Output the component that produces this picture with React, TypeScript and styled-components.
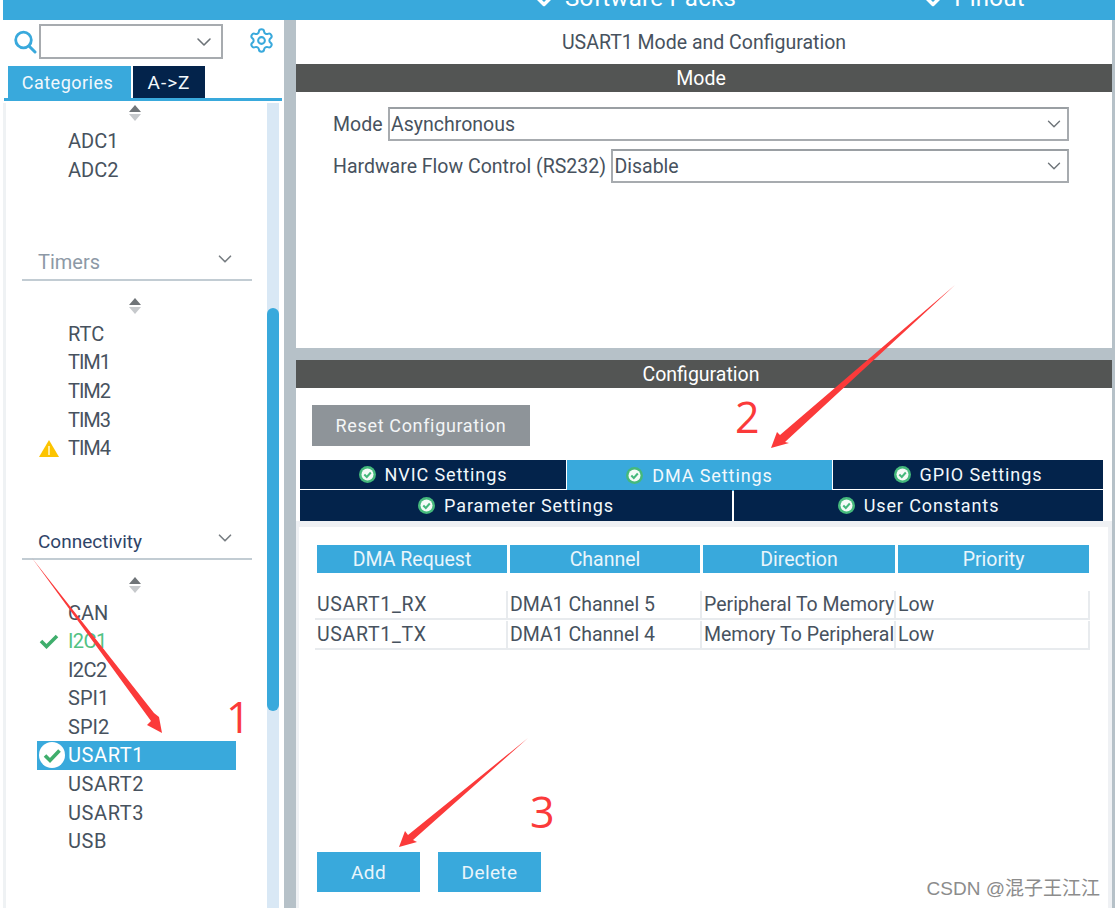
import React from "react";
import styled, { createGlobalStyle } from "styled-components";
import { ChevronDown, Settings } from "lucide-react";

const BLUE = "#39a9dc";
const NAVY = "#03234b";
const DARK = "#535554";
const GUTTER = "#b6c1c8";
const TEXT = "#47525e";

const Global = createGlobalStyle`
  html, body { margin: 0; padding: 0; background: #fff; }
  body { font-family: Roboto, "Liberation Sans", sans-serif; }
  * { box-sizing: border-box; }
`;

const Page = styled.div`
  position: relative;
  width: 1115px;
  height: 908px;
  overflow: hidden;
  padding-left: 3px;
  display: flex;
  flex-direction: column;
  background: #fff;
`;

const TopBar = styled.header`
  height: 20px;
  flex: none;
  background: ${BLUE};
  overflow: hidden;
`;

const TopMenu = styled.nav`
  display: flex;
  margin: -17px 0 0 527px;
  gap: 183px;
`;

const TopMenuItem = styled.div`
  display: flex;
  align-items: flex-start;
  gap: 7px;
  color: #fff;
  font-size: 24px;
  letter-spacing: 0.3px;
  line-height: 30px;
  svg {
    margin-top: 4px;
  }
`;

const Body = styled.div`
  flex: 1;
  min-height: 0;
  display: flex;
`;

const Sidebar = styled.aside`
  width: 281px;
  flex: none;
  display: flex;
  flex-direction: column;
`;

const SearchRow = styled.div`
  height: 46px;
  flex: none;
  display: flex;
  align-items: flex-start;
  padding: 4px 0 0 10px;
`;

const SearchIcon = styled.svg`
  width: 24px;
  height: 24px;
  margin: 6px 2px 0 0;
  flex: none;
`;

const SearchBox = styled.div`
  width: 184px;
  height: 35px;
  border: 2px solid #a7abaf;
  display: flex;
  align-items: center;
  justify-content: flex-end;
  padding-right: 5px;
  color: #6d7378;
`;

const Gear = styled.div`
  margin: 3px 0 0 25px;
  color: ${BLUE};
  display: flex;
`;

const TabStrip = styled.div`
  height: 35px;
  flex: none;
  display: flex;
  align-items: flex-start;
  gap: 2px;
  padding-left: 4px;
  border-bottom: 3px solid ${BLUE};
  margin-right: 2px;
  margin-left: 1px;
`;

const SideTab = styled.div<{ $active?: boolean }>`
  height: 32px;
  width: ${(p) => (p.$active ? "123px" : "72px")};
  padding-right: ${(p) => (p.$active ? "4px" : "0")};
  background: ${(p) => (p.$active ? BLUE : NAVY)};
  color: #f2f8fc;
  font-size: ${(p) => (p.$active ? "18px" : "19px")};
  letter-spacing: ${(p) => (p.$active ? "0.5px" : "1px")};
  display: flex;
  align-items: center;
  justify-content: center;
`;

const ListWrap = styled.div`
  flex: 1;
  min-height: 0;
  display: flex;
  margin-top: 2px;
`;

const LeftEdge = styled.div`
  width: 3px;
  flex: none;
  background: #eff2f4;
`;

const List = styled.div`
  width: 261px;
  flex: none;
`;

const Track = styled.div`
  width: 12px;
  flex: none;
  background: #d9e8f5;
  padding-top: 205px;
`;

const Thumb = styled.div`
  height: 403px;
  background: ${BLUE};
  border-radius: 6px;
`;

const SortArrows = styled.svg<{ $top: number }>`
  display: block;
  width: 14px;
  height: 18px;
  margin: ${(p) => p.$top}px 0 4.7px 122px;
`;

const GroupHeader = styled.div<{ $strong?: boolean }>`
  height: 37px;
  margin: 60px 0 0 16px;
  width: 230px;
  border-bottom: 2px solid #c2ccd3;
  display: flex;
  align-items: center;
  justify-content: space-between;
  padding: 2px 16px 0 16px;
  font-size: ${(p) => (p.$strong ? "19px" : "20px")};
  color: ${(p) => (p.$strong ? "#2f4468" : "#8d99a6")};
`;

const GroupChevron = styled.div`
  display: flex;
  margin-top: -6px;
  color: #777d82;
`;

const Item = styled.div<{ $state?: "selected" | "ok"; $track?: number }>`
  height: 28.6px;
  width: 199px;
  margin-left: 31px;
  display: flex;
  align-items: center;
  font-size: 20px;
  letter-spacing: ${(p) => p.$track ?? 0}px;
  background: ${(p) => (p.$state === "selected" ? BLUE : "transparent")};
  color: ${(p) =>
    p.$state === "selected" ? "#fff" : p.$state === "ok" ? "#52c283" : TEXT};
`;

const ItemIcon = styled.span`
  width: 31px;
  flex: none;
  display: flex;
  align-items: center;
  padding-left: 2px;
`;

const Gap = styled.div`
  width: 12px;
  flex: none;
  background: ${GUTTER};
`;

const Main = styled.main`
  width: 816px;
  flex: none;
  display: flex;
  flex-direction: column;
`;

const RightEdge = styled.div`
  flex: 1;
  background: ${GUTTER};
`;

const Title = styled.div`
  height: 44px;
  flex: none;
  display: flex;
  align-items: center;
  justify-content: center;
  font-size: 19.5px;
  color: ${TEXT};
`;

const SectionBar = styled.div`
  height: 28px;
  flex: none;
  background: ${DARK};
  color: #fff;
  font-size: 19.5px;
  display: flex;
  align-items: center;
  justify-content: center;
  padding: 1px 6px 0 0;
`;

const ModePanel = styled.section`
  height: 256px;
  flex: none;
  padding: 15px 43px 0 37px;
  display: flex;
  flex-direction: column;
  gap: 8px;
`;

const FieldRow = styled.div`
  display: flex;
  align-items: center;
  gap: 5.5px;
  font-size: 19.5px;
  color: ${TEXT};
`;

const Select = styled.div`
  flex: 1;
  height: 34px;
  border: 2px solid #a7abaf;
  border-top-color: #9a9fa3;
  display: flex;
  align-items: center;
  justify-content: space-between;
  padding: 0 2px 0 1px;
  color: ${TEXT};
`;

const Divider = styled.div`
  height: 12px;
  flex: none;
  background: ${GUTTER};
`;

const ConfigPanel = styled.section`
  flex: 1;
  min-height: 0;
  display: flex;
  flex-direction: column;
`;

const ResetButton = styled.div`
  width: 218px;
  height: 41px;
  flex: none;
  margin: 17px 0 14px 16px;
  background: #8e9499;
  color: #f3f5f6;
  font-size: 18px;
  letter-spacing: 0.65px;
  display: flex;
  align-items: center;
  justify-content: center;
`;

const TabRow = styled.div<{ $cols: string }>`
  display: grid;
  grid-template-columns: ${(p) => p.$cols};
  column-gap: 1px;
  width: 803px;
  margin-left: 4px;
  height: 30px;
  flex: none;
`;

const ConfigTab = styled.div<{ $active?: boolean }>`
  background: ${(p) => (p.$active ? BLUE : NAVY)};
  color: #f2f8fc;
  font-size: 18px;
  letter-spacing: 0.9px;
  height: ${(p) => (p.$active ? "31px" : "29px")};
  position: relative;
  display: flex;
  align-items: center;
  justify-content: center;
  gap: 9px;
`;

const SecondRow = styled(TabRow)`
  height: 31px;
  column-gap: 2px;
  ${ConfigTab} {
    height: 31px;
  }
`;

const TabContent = styled.div`
  flex: 1;
  min-height: 0;
  display: flex;
  flex-direction: column;
  background: #eff1f4;
  padding: 6px 4px 0 3px;
`;

const TabInner = styled.div`
  flex: 1;
  min-height: 0;
  background: #fff;
  padding: 18px 0 16px 18px;
  display: flex;
  flex-direction: column;
`;

const HeadRow = styled.div`
  display: grid;
  grid-template-columns: 190px 190px 192px 191px;
  column-gap: 3px;
  margin-bottom: 17px;
`;

const HeadCell = styled.div`
  height: 28px;
  background: ${BLUE};
  color: #eaf5fb;
  font-size: 19.5px;
  display: flex;
  align-items: center;
  justify-content: center;
`;

const BodyRow = styled.div`
  display: grid;
  grid-template-columns: 193px 194px 194px 194px;
  width: 775px;
  margin-left: -2px;
  height: 30px;
  padding-top: 1px;
  border-bottom: 2px solid #e8ebee;
`;

const BodyCell = styled.div<{ $track?: number }>`
  font-size: 19.5px;
  letter-spacing: ${(p) => p.$track ?? 0}px;
  color: ${TEXT};
  display: flex;
  align-items: center;
  padding: 0 0 1px 2px;
  border-right: 2px solid #e8ebee;
  white-space: nowrap;
  overflow: hidden;
`;

const ButtonRow = styled.div`
  margin-top: auto;
  display: flex;
  gap: 18px;
`;

const ActionButton = styled.div`
  width: 103px;
  height: 40px;
  background: ${BLUE};
  color: #eaf5fb;
  font-size: 19px;
  letter-spacing: 0.4px;
  display: flex;
  align-items: center;
  justify-content: center;
`;

const Annotations = styled.svg`
  position: absolute;
  inset: 0;
  width: 1115px;
  height: 908px;
  pointer-events: none;
`;

const Numeral = styled.span<{ $x: number; $y: number }>`
  position: absolute;
  left: ${(p) => p.$x}px;
  top: ${(p) => p.$y}px;
  font-family: "Open Sans", "Noto Sans", sans-serif;
  font-size: 43px;
  line-height: 58px;
  color: #fb3a3a;
`;

const Watermark = styled.span`
  position: absolute;
  right: 15px;
  bottom: 8px;
  font-family: "Liberation Sans", "Noto Sans CJK SC", sans-serif;
  font-size: 19px;
  line-height: 22px;
  color: #8c8c8c;
  white-space: nowrap;
`;

const Sort = ({ top }: { top: number }) => (
  <SortArrows $top={top} viewBox="0 0 14 18">
    <path d="M7 1 L13 8 H1 Z" fill="#6f7478" />
    <path d="M7 17 L13 10 H1 Z" fill="#c6c9cc" />
  </SortArrows>
);

const TabCheck = () => (
  <svg width="17" height="17" viewBox="0 0 17 17">
    <circle cx="8.5" cy="8.5" r="8.5" fill="#45b97c" />
    <circle cx="8.5" cy="8.5" r="6" fill="#f4fbf7" />
    <path d="M5.3 8.5 L7.8 11 L11.8 6.5" fill="none" stroke="#45b97c" strokeWidth="2" />
  </svg>
);

const OkIcon = () => (
  <svg width="20" height="16" viewBox="0 0 20 16">
    <path d="M2 8 L7.5 13.5 L18 3" fill="none" stroke="#3fae6c" strokeWidth="3.6" />
  </svg>
);

const SelectedIcon = () => (
  <svg width="26" height="26" viewBox="0 0 26 26">
    <circle cx="13" cy="13" r="13" fill="#fff" />
    <path d="M6 13.5 L11 18.5 L20.5 8.5" fill="none" stroke="#3fae6c" strokeWidth="3.6" />
  </svg>
);

const WarnIcon = () => (
  <svg width="20" height="17" viewBox="0 0 20 17">
    <path d="M10 0 L20 17 H0 Z" fill="#fcc400" />
    <rect x="9.2" y="6" width="1.6" height="9" fill="#fff4c4" />
  </svg>
);

const tabs1 = [
  { label: "NVIC Settings" },
  { label: "DMA Settings", active: true },
  { label: "GPIO Settings" },
];

const rows = [
  ["USART1_RX", "DMA1 Channel 5", "Peripheral To Memory", "Low"],
  ["USART1_TX", "DMA1 Channel 4", "Memory To Peripheral", "Low"],
];

export default function App() {
  return (
    <Page>
      <Global />
      <TopBar>
        <TopMenu>
          <TopMenuItem>
            <ChevronDown size={28} strokeWidth={3} />
            Software Packs
          </TopMenuItem>
          <TopMenuItem>
            <ChevronDown size={28} strokeWidth={3} />
            Pinout
          </TopMenuItem>
        </TopMenu>
      </TopBar>
      <Body>
        <Sidebar>
          <SearchRow>
            <SearchIcon viewBox="0 0 24 24">
              <circle cx="10.5" cy="10" r="7.8" fill="none" stroke={BLUE} strokeWidth="2.8" />
              <path d="M16 16 L22 22" stroke={BLUE} strokeWidth="3" strokeLinecap="round" />
            </SearchIcon>
            <SearchBox>
              <ChevronDown size={24} strokeWidth={1.6} />
            </SearchBox>
            <Gear>
              <Settings size={27} strokeWidth={1.8} />
            </Gear>
          </SearchRow>
          <TabStrip>
            <SideTab $active>Categories</SideTab>
            <SideTab>A-&gt;Z</SideTab>
          </TabStrip>
          <ListWrap>
            <LeftEdge />
            <List>
              <Sort top={1} />
              <Item><ItemIcon />ADC1</Item>
              <Item><ItemIcon />ADC2</Item>
              <GroupHeader>
                Timers
                <GroupChevron><ChevronDown size={22} strokeWidth={1.8} /></GroupChevron>
              </GroupHeader>
              <Sort top={16} />
              <Item><ItemIcon />RTC</Item>
              <Item $track={-1}><ItemIcon />TIM1</Item>
              <Item $track={-1}><ItemIcon />TIM2</Item>
              <Item $track={-1}><ItemIcon />TIM3</Item>
              <Item $track={-1}><ItemIcon><WarnIcon /></ItemIcon>TIM4</Item>
              <GroupHeader $strong>
                Connectivity
                <GroupChevron><ChevronDown size={22} strokeWidth={1.8} /></GroupChevron>
              </GroupHeader>
              <Sort top={16} />
              <Item><ItemIcon />CAN</Item>
              <Item $state="ok" $track={-0.6}><ItemIcon><OkIcon /></ItemIcon>I2C1</Item>
              <Item $track={-0.6}><ItemIcon />I2C2</Item>
              <Item><ItemIcon />SPI1</Item>
              <Item><ItemIcon />SPI2</Item>
              <Item $state="selected" $track={0.6}><ItemIcon><SelectedIcon /></ItemIcon>USART1</Item>
              <Item $track={0.6}><ItemIcon />USART2</Item>
              <Item $track={0.6}><ItemIcon />USART3</Item>
              <Item $track={0.6}><ItemIcon />USB</Item>
            </List>
            <Track><Thumb /></Track>
          </ListWrap>
        </Sidebar>
        <Gap />
        <Main>
          <Title>USART1 Mode and Configuration</Title>
          <SectionBar>Mode</SectionBar>
          <ModePanel>
            <FieldRow>
              Mode
              <Select>Asynchronous<ChevronDown size={22} strokeWidth={1.5} color="#6d7378" /></Select>
            </FieldRow>
            <FieldRow>
              Hardware Flow Control (RS232)
              <Select>Disable<ChevronDown size={22} strokeWidth={1.5} color="#6d7378" /></Select>
            </FieldRow>
          </ModePanel>
          <Divider />
          <ConfigPanel>
            <SectionBar>Configuration</SectionBar>
            <ResetButton>Reset Configuration</ResetButton>
            <TabRow $cols="266px 265px 270px">
              {tabs1.map((t) => (
                <ConfigTab key={t.label} $active={t.active}>
                  <TabCheck />
                  {t.label}
                </ConfigTab>
              ))}
            </TabRow>
            <SecondRow $cols="432px 369px">
              <ConfigTab><TabCheck />Parameter Settings</ConfigTab>
              <ConfigTab><TabCheck />User Constants</ConfigTab>
            </SecondRow>
            <TabContent>
              <TabInner>
                <HeadRow>
                  <HeadCell>DMA Request</HeadCell>
                  <HeadCell>Channel</HeadCell>
                  <HeadCell>Direction</HeadCell>
                  <HeadCell>Priority</HeadCell>
                </HeadRow>
                {rows.map((r) => (
                  <BodyRow key={r[0]}>
                    {r.map((c, i) => (
                      <BodyCell key={i} $track={i === 0 ? 0.7 : 0}>{c}</BodyCell>
                    ))}
                  </BodyRow>
                ))}
                <ButtonRow>
                  <ActionButton>Add</ActionButton>
                  <ActionButton>Delete</ActionButton>
                </ButtonRow>
              </TabInner>
            </TabContent>
          </ConfigPanel>
        </Main>
        <RightEdge />
      </Body>
      <Annotations viewBox="0 0 1115 908">
        <path d="M32 558 L154 713 L159 717 L162 733 L147 725 L151 721 Z" fill="#fb3a3a" />
        <path d="M955 285 L785 442 L789 443 L771 448 L777 432 L780 435 Z" fill="#fb3a3a" />
        <path d="M528 738 L413 840 L417 842 L399 847 L405 831 L408 835 Z" fill="#fb3a3a" />
      </Annotations>
      <Numeral $x={226} $y={688}>1</Numeral>
      <Numeral $x={735} $y={388}>2</Numeral>
      <Numeral $x={530} $y={783}>3</Numeral>
      <Watermark>CSDN @混子王江江</Watermark>
    </Page>
  );
}
